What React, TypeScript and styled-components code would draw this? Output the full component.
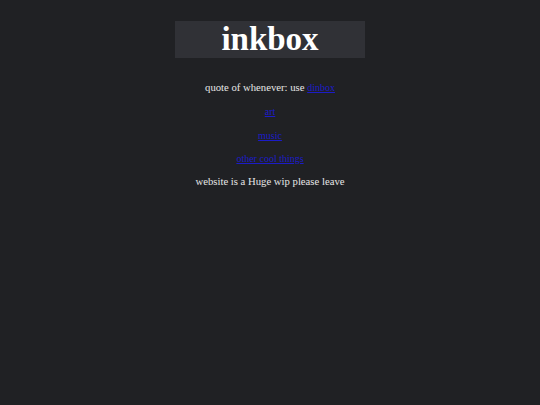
import styled, { createGlobalStyle } from "styled-components";

const GlobalStyle = createGlobalStyle`
  html, body {
    margin: 0;
    padding: 0;
    background: #202124;
    min-height: 100%;
  }
  body {
    font-family: "Liberation Serif", "Times New Roman", serif;
    color: #e8e8e8;
  }
`

const Page = styled.main`
  display: flex;
  flex-direction: column;
  align-items: center;
  padding-top: 21px;
  min-height: 405px;
  box-sizing: border-box;
`

const Title = styled.h1`
  margin: 0 0 18px;
  width: 190px;
  height: 37px;
  background: #303136;
  color: #ffffff;
  font-size: 33px;
  font-weight: bold;
  line-height: 37px;
  text-align: center;
`

const Line = styled.p`
  margin: 0;
  height: 23px;
  line-height: 23px;
  font-size: 10.7px;
  color: #e6e6e6;
  text-align: center;
`

const LinkLine = styled(Line)`
  height: 24px;
  line-height: 24px;
`

const Link = styled.a`
  color: #1c1cc8;
  font-size: 10px;
  text-decoration: underline;
`

const App = () => {
  return (
    <>
      <GlobalStyle />
      <Page>
        <Title>inkbox</Title>
        <Line>
          quote of whenever: use <Link href="#">dinbox</Link>
        </Line>
        <LinkLine>
          <Link href="#">art</Link>
        </LinkLine>
        <LinkLine>
          <Link href="#">music</Link>
        </LinkLine>
        <Line>
          <Link href="#">other cool things</Link>
        </Line>
        <Line>website is a Huge wip please leave</Line>
      </Page>
    </>
  )
}

export default App
